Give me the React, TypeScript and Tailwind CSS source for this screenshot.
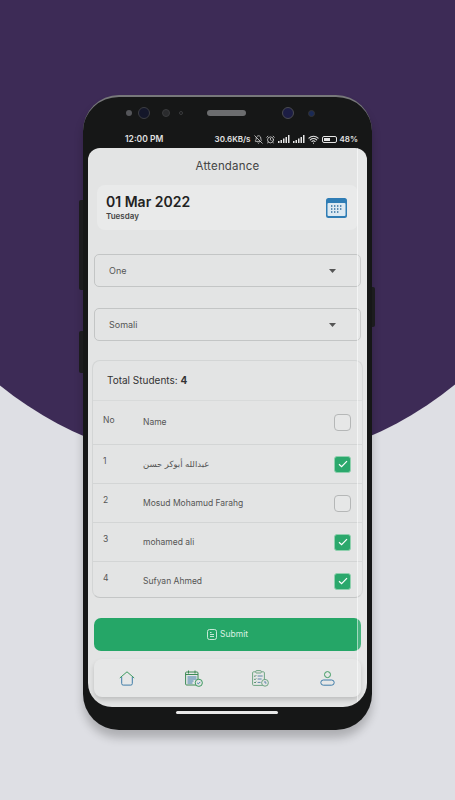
import { AlarmClock, BellOff, ChevronDown, Wifi } from 'lucide-react'

const students = [
  { no: 1, name: 'عبدالله أبوكر حسن', checked: true },
  { no: 2, name: 'Mosud Mohamud Farahg', checked: false },
  { no: 3, name: 'mohamed ali', checked: true },
  { no: 4, name: 'Sufyan Ahmed', checked: true },
]

function Signal() {
  return (
    <svg width="12" height="8" viewBox="0 0 12 8" fill="#e5e5e5">
      <rect x="0" y="6" width="1.5" height="2" />
      <rect x="2.5" y="5" width="1.5" height="3" />
      <rect x="5" y="3.5" width="1.5" height="4.5" />
      <rect x="7.5" y="2" width="1.5" height="6" />
      <rect x="10" y="0" width="1.5" height="8" />
    </svg>
  )
}

function CheckBox({ checked }: { checked: boolean }) {
  if (checked) {
    return (
      <div className="w-[17px] h-[17px] rounded-[3px] bg-[#2BA86C] border border-[#8FD0AE] flex items-center justify-center">
        <svg width="10" height="8" viewBox="0 0 10 8" fill="none" stroke="#fff" strokeWidth="1.2">
          <path d="M1 4.2 3.6 6.6 9 1.2" />
        </svg>
      </div>
    )
  }
  return <div className="w-[17px] h-[17px] rounded-[4px] border border-[#b5b7b7] bg-[#e6e7e7]" />
}

function Select({ label }: { label: string }) {
  return (
    <div className="mx-[6px] h-[33px] rounded-[5px] border border-[#c3c5c5] flex items-center justify-between pl-[14px] pr-[24px] text-[9px] text-[#555]">
      <span>{label}</span>
      <svg width="7" height="4" viewBox="0 0 7 4" fill="#555">
        <path d="M0 0h7L3.5 4z" />
      </svg>
    </div>
  )
}

function HomeIcon() {
  return (
    <svg width="16" height="15" viewBox="0 0 16 15" fill="none" strokeWidth="1">
      <path d="M.8 7 8 .8 15.2 7" stroke="#3C9A5F" />
      <path d="M2.7 6v6.6a1.5 1.5 0 0 0 1.5 1.5h7.6a1.5 1.5 0 0 0 1.5-1.5V6" stroke="#3F7CA8" />
    </svg>
  )
}

function CalendarCheckIcon() {
  return (
    <svg width="18" height="17" viewBox="0 0 18 17" fill="none" strokeWidth="1">
      <rect x=".6" y="2" width="12.4" height="13" rx="1" stroke="#3C8A55" />
      <path d="M3.5.5v3M10 .5v3M.6 4.5H13" stroke="#3C8A55" />
      <path d="M2.5 7h9M2.5 9h9M2.5 11h6M2.5 13h5" stroke="#3F7CA8" />
      <circle cx="13.8" cy="12.8" r="3.6" fill="#e3e4e4" stroke="#3C9A5F" />
      <path d="M12.2 12.9l1.1 1 2-2" stroke="#3F7CA8" />
    </svg>
  )
}

function ClipboardClockIcon() {
  return (
    <svg width="17" height="17" viewBox="0 0 17 17" fill="none" strokeWidth="1">
      <rect x=".6" y="1.8" width="11.8" height="13.6" rx="1" stroke="#6FA583" />
      <rect x="3.8" y=".6" width="5.4" height="2.4" rx=".6" fill="#e3e4e4" stroke="#6FA583" />
      <path d="M2.2 5.8l.8.8 1.2-1.4M2.2 9l.8.8 1.2-1.4M2.2 12.2l.8.8 1.2-1.4" stroke="#4F8A66" />
      <path d="M5.6 6h5M5.6 9h4M5.6 12.4h3" stroke="#5D86A8" />
      <circle cx="13" cy="12.8" r="3.4" fill="#e3e4e4" stroke="#6FA583" />
      <path d="M13 11v2h1.5" stroke="#5D86A8" />
    </svg>
  )
}

function UserIcon() {
  return (
    <svg width="15" height="15" viewBox="0 0 15 15" fill="none" strokeWidth="1">
      <circle cx="7.5" cy="3.6" r="3" stroke="#3C9A5F" />
      <rect x=".8" y="9" width="13.4" height="5.2" rx="2.6" stroke="#3F7CA8" />
    </svg>
  )
}

export default function App() {
  return (
    <div
      className="relative w-[455px] h-[800px] overflow-hidden bg-[#DEDFE4] pt-[95px]"
      style={{ fontFamily: 'Inter, "DejaVu Sans", sans-serif' }}
    >
      {/* purple backdrop */}
      <div className="absolute left-[-133px] top-[-254px] w-[720px] h-[720px] rounded-full bg-[#3D2B56]" />

      <div className="relative ml-[83px] w-[289px] h-[635px] rounded-[36px] bg-[#161717] border-t-[2px] border-[#77787a] shadow-[0_8px_10px_rgba(0,0,0,0.22)] px-[5px]">
        {/* side buttons */}
        <div className="absolute left-[-4px] top-[103px] w-[4px] h-[90px] rounded-l-[2px] bg-[#1c1c1e]" />
        <div className="absolute left-[-4px] top-[234px] w-[4px] h-[42px] rounded-l-[2px] bg-[#1c1c1e]" />
        <div className="absolute right-[-3px] top-[190px] w-[3px] h-[40px] rounded-r-[2px] bg-[#1c1c1e]" />

        {/* sensors and speaker */}
        <div className="h-[33px] relative">
          <div className="absolute left-[38px] top-[13px] w-[6px] h-[6px] rounded-full bg-[#55565a]" />
          <div className="absolute left-[50px] top-[10px] w-[12px] h-[12px] rounded-full bg-[#14172a] border border-[#3d3e42]" />
          <div className="absolute left-[74px] top-[12px] w-[8px] h-[8px] rounded-full bg-[#2a2b2d] border border-[#3a3b3d]" />
          <div className="absolute left-[91px] top-[14px] w-[4px] h-[4px] rounded-full border border-[#3a3b3d]" />
          <div className="absolute left-[119px] top-[13px] w-[39px] h-[6px] rounded-full bg-[#6c6d6f]" />
          <div className="absolute left-[194px] top-[10px] w-[12px] h-[12px] rounded-full bg-[#1c1d44] border border-[#4a4b50]" />
          <div className="absolute left-[220px] top-[13px] w-[7px] h-[7px] rounded-full bg-[#1a2a55] border border-[#333]" />
        </div>

        {/* status bar */}
        <div className="h-[18px] flex items-center justify-between pl-[37px] pr-[9px] text-[8.5px] font-semibold text-[#e2e2e2]">
          <span>12:00 PM</span>
          <div className="flex items-center gap-[3px]">
            <span className="text-[8px]">30.6KB/s</span>
            <BellOff size={9} strokeWidth={2} />
            <AlarmClock size={9} strokeWidth={2} />
            <Signal />
            <Signal />
            <Wifi size={11} strokeWidth={2.4} />
            <div className="w-[15px] h-[7px] rounded-[2px] border border-[#e5e5e5] p-[1px]">
              <div className="w-[6px] h-full bg-[#e5e5e5]" />
            </div>
            <span className="text-[8px]">48%</span>
          </div>
        </div>

        {/* screen */}
        <div className="relative h-[559px] w-[279px] rounded-t-[12px] rounded-b-[24px] bg-[#E3E4E4] flex flex-col overflow-hidden text-[#333]">
          <div className="h-[37px] shrink-0 flex items-center justify-center text-[11.5px] text-[#444] tracking-[0.2px]">
            Attendance
          </div>

          <div className="mx-[9px] h-[45px] rounded-[8px] bg-[#e9eaea] flex items-center justify-between pl-[9px] pr-[11px]">
            <div className="flex flex-col">
              <span className="text-[14px] leading-[18px] font-semibold text-[#222]">01 Mar 2022</span>
              <span className="text-[8px] leading-[11px] font-semibold text-[#444]">Tuesday</span>
            </div>
            <svg width="21" height="20" viewBox="0 0 21 20">
              <rect width="21" height="20" rx="2.5" fill="#2F7DB5" />
              <rect x="1.5" y="5" width="18" height="13" rx="1" fill="#DCE9F2" />
              <path d="M5 8h1.4M8 8h1.4M11 8h1.4M14 8h1.4M5 11h1.4M8 11h1.4M11 11h1.4M14 11h1.4M5 14h1.4M8 14h1.4M11 14h1.4" stroke="#2F6E9E" strokeWidth="1.4" />
            </svg>
          </div>

          <div className="mt-[24px]">
            <Select label="One" />
          </div>
          <div className="mt-[21px]">
            <Select label="Somali" />
          </div>

          <div className="mt-[19px] mx-[4px] h-[238px] rounded-[8px] border border-[#d3d5d5] border-b-[#c4c6c6] flex flex-col">
            <div className="h-[39px] shrink-0 flex items-center pl-[14px] text-[10px] text-[#333]">
              <span>
                Total Students: <b className="font-bold">4</b>
              </span>
            </div>
            <div className="h-[44px] shrink-0 border-t border-[#d8dada] flex items-center pl-[10px] pr-[11px] text-[8.5px] text-[#555]">
              <span className="w-[40px] -mt-[4px]">No</span>
              <span className="flex-1">Name</span>
              <div className="mr-[0px]">
                <CheckBox checked={false} />
              </div>
            </div>
            {students.map((s) => (
              <div
                key={s.no}
                className="h-[39px] shrink-0 border-t border-[#d3d5d5] flex items-center pl-[10px] pr-[11px] text-[8.5px] text-[#555]"
              >
                <span className="w-[40px] -mt-[5px]">{s.no}</span>
                <span className="flex-1">{s.name}</span>
                <CheckBox checked={s.checked} />
              </div>
            ))}
          </div>

          <div className="mt-[20px] mx-[6px] h-[33px] shrink-0 rounded-[7px] bg-[#25A667] flex items-center justify-center gap-[3px] text-[8.5px] text-[#d9f0e3]">
            <svg width="10" height="11" viewBox="0 0 10 11" fill="none" stroke="#d9f0e3" strokeWidth="0.9">
              <rect x=".5" y=".5" width="9" height="10" rx="2" />
              <path d="M3 3.5h1.5M3 5.5h4M3 7.5h4" />
            </svg>
            <span>Submit</span>
          </div>

          <div className="mt-[8px] mx-[6px] h-[38px] shrink-0 rounded-[8px] bg-[#e6e7e7] shadow-[0_3px_5px_rgba(0,0,0,0.16)] grid grid-cols-4 items-center justify-items-center">
            <HomeIcon />
            <CalendarCheckIcon />
            <ClipboardClockIcon />
            <UserIcon />
          </div>

          {/* glass reflection */}
          <div className="absolute right-0 top-0 bottom-0 w-[10px] bg-white/15 border-l border-white/50" />
        </div>

        {/* home indicator */}
        <div className="mt-[4px] ml-[88px] w-[102px] h-[3px] rounded-full bg-[#e8e8e8]" />
      </div>
    </div>
  )
}
